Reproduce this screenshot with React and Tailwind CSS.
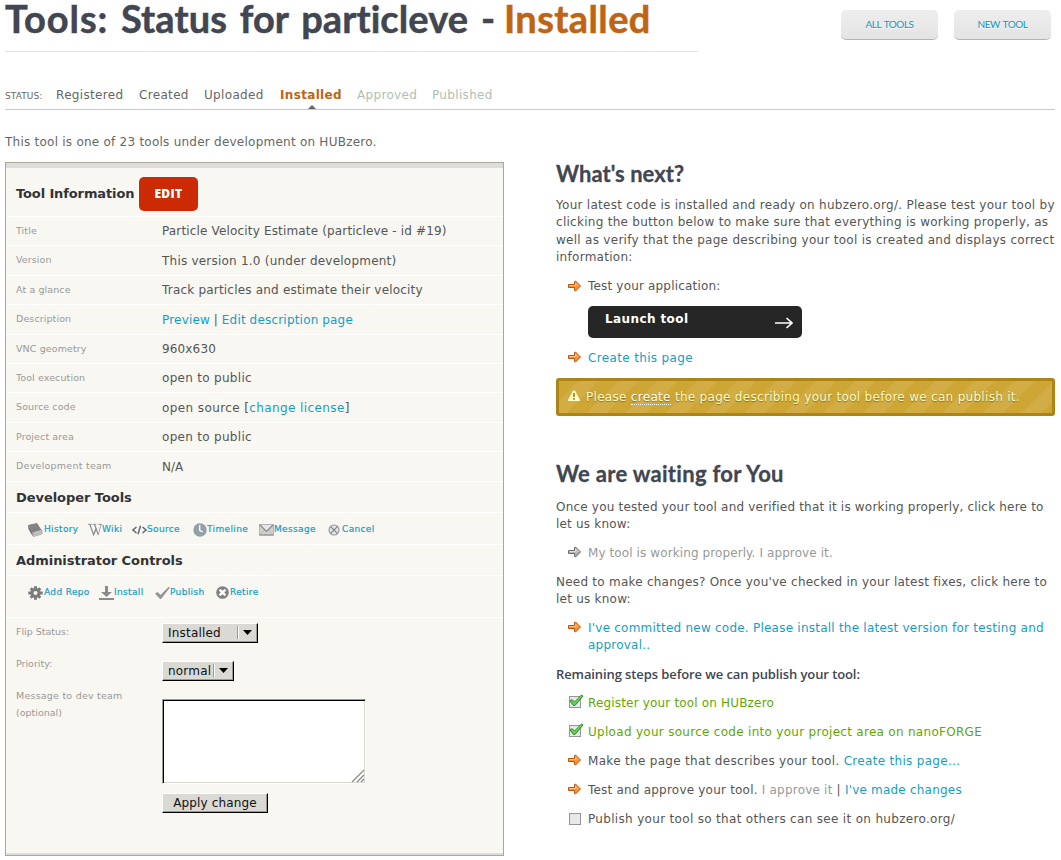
import React from "react";

const Arrow = ({ gray = false }) => {
  const edge = gray ? "#6a6a6a" : "#c05208";
  const fill = gray ? "#b8b8b8" : "#ff9434";
  return (
    <svg width="13" height="13" viewBox="0 0 13 13" className="block shrink-0">
      <path d="M0.5 4.5H6.5V1.5L7.5 1L12.5 6L7.5 11L6.5 10.5V7.5H0.5Z" fill={fill} stroke={edge} />
      <path d="M1.5 5.5H7.5V3L10.5 6" fill="none" stroke={gray ? "#dedede" : "#ffc27c"} />
      <path d="M8 9.5L11.5 6" fill="none" stroke={gray ? "#8c8c8c" : "#f07818"} />
    </svg>
  );
};

const Box = ({ checked = false }) => (
  <svg width="16" height="15" viewBox="0 0 16 15" className="block shrink-0">
    <rect x="1.5" y="2.5" width="11" height="11" fill="#e8e8e8" stroke="#969696" />
    {checked && (
      <>
        <path d="M2 7L4 5.5L6.5 8L13.5 1L15 2L7 11.5H5.5Z" fill="#58cc48" stroke="#2c8b28" />
        <path d="M4 7L6.5 9.5L13.5 2" fill="none" stroke="#8be070" strokeWidth=".6" />
      </>
    )}
  </svg>
);

const BookIcon = () => (
  <svg width="15" height="14" viewBox="0 0 15 14" className="block">
    <path d="M0 2L9 0L13.5 7L4.5 9.5Z" fill="#828282" />
    <path d="M0 2L4.5 9.5L4.8 13.5L0.5 6Z" fill="#6c6c6c" />
    <path d="M5 9.8L14 7.3V11L5.5 13.5Z" fill="#d4d4d4" stroke="#8a8a8a" strokeWidth=".6" />
    <path d="M5.5 11.7L14 9.2" stroke="#999" strokeWidth=".7" />
  </svg>
);
const WikiIcon = () => (
  <svg width="15" height="13" viewBox="0 0 15 13" className="block" fill="none" stroke="#8a8f94">
    <path d="M0 1H4M5 1H9M11 1H15" strokeWidth="1" />
    <path d="M2 1L6 12L9 5M7 1L11 12" strokeWidth="1.4" />
    <path d="M9 5L6 12M11 12L14 1" strokeWidth=".8" />
  </svg>
);
const CodeIcon = () => (
  <svg width="15" height="10" viewBox="0 0 15 10" className="block" fill="none" stroke="#606a70" strokeWidth="1.5">
    <path d="M4.5 2L1 5L4.5 8M10.5 2L14 5L10.5 8M8.5 .8L6 9.2" />
  </svg>
);
const ClockIcon = () => (
  <svg width="14" height="14" viewBox="0 0 14 14" className="block">
    <circle cx="7" cy="7" r="6.7" fill="#92a0aa" />
    <path d="M6.7 2V7.3L9.8 9" fill="none" stroke="#fff" strokeWidth="1.4" />
  </svg>
);
const MailIcon = () => (
  <svg width="15" height="12" viewBox="0 0 15 12" className="block">
    <rect x=".5" y=".5" width="14" height="10.5" fill="#d0d0d0" stroke="#b4b4b4" />
    <path d="M.5 10.5L6 5.5M14.5 10.5L9 5.5" stroke="#bcbcbc" />
    <path d="M1 1L7.5 7.5L14 1" fill="#e6e6e6" stroke="#858585" strokeWidth="1.1" />
    <path d="M.5 11H14.5" stroke="#888" />
  </svg>
);
const CancelIcon = () => (
  <svg width="12" height="12" viewBox="0 0 12 12" className="block" fill="none">
    <circle cx="6" cy="6" r="5" fill="#e3e5e7" stroke="#8d9399" strokeWidth="1.1" />
    <path d="M2.7 2.7L9.3 9.3M9.3 2.7L2.7 9.3" stroke="#7d8389" strokeWidth="1.2" />
  </svg>
);
const GearIcon = () => (
  <svg width="15" height="14" viewBox="0 0 15 14" className="block">
    <g stroke="#7b7b7b" strokeWidth="3">
      <path d="M7.5 0.3V13.7M0.3 7H14.7M2.7 2.2L12.3 11.8M12.3 2.2L2.7 11.8" />
    </g>
    <circle cx="7.5" cy="7" r="5" fill="#7b7b7b" />
    <circle cx="7.5" cy="7" r="2" fill="#f8f7f2" />
  </svg>
);
const InstallIcon = () => (
  <svg width="15" height="14" viewBox="0 0 15 14" className="block" fill="#8b8b8b">
    <path d="M6 0H9V6H13L7.5 11L2 6H6Z" />
    <path d="M0 12H15V14H0Z" />
  </svg>
);
const CheckIcon = () => (
  <svg width="15" height="12" viewBox="0 0 15 12" className="block">
    <path d="M0 6.5L2.5 5L5.5 8L13.5 0L15 .5L6 12H5Z" fill="#949494" />
  </svg>
);
const RetireIcon = () => (
  <svg width="13" height="13" viewBox="0 0 13 13" className="block">
    <circle cx="6.5" cy="6.5" r="6.3" fill="#808080" />
    <path d="M3.6 3.6L9.4 9.4M9.4 3.6L3.6 9.4" stroke="#fff" strokeWidth="2.4" />
  </svg>
);

const Link = ({ children }) => <a className="text-[#149ec6]">{children}</a>;

const rows = [
  ["Title", "Particle Velocity Estimate (particleve - id #19)", "pt-[1.4px] tracking-[0.16px]"],
  ["Version", "This version 1.0 (under development)", "pt-[1.4px] tracking-[0.22px]"],
  ["At a glance", "Track particles and estimate their velocity", "pt-[1.4px] tracking-[0.2px]"],
  ["Description", <><Link>Preview</Link> | <Link>Edit description page</Link></>, "pt-[2.6px] tracking-[0.2px] [word-spacing:-0.3px]"],
  ["VNC geometry", "960x630", "pt-[1.4px] tracking-[0.15px]"],
  ["Tool execution", "open to public", "pt-[1.4px] tracking-[0.3px]"],
  ["Source code", <>open source [<Link>change license</Link>]</>, "pt-[1.4px] tracking-[0.4px]"],
  ["Project area", "open to public", "pt-[1.4px] tracking-[0.3px]"],
  ["Development team", "N/A", "pt-[1.4px]"],
];

const ToolLink = ({ icon, label, w, iw = "w-[15px]" }) => (
  <a className={`flex items-start text-[9px] leading-[11px] tracking-[0.35px] text-[#149ec6] [-webkit-text-stroke:0.2px_#149ec6] ${w}`}>
    <span className={`flex h-[14px] shrink-0 items-center ${iw}`}>{icon}</span>
    <span className="pt-px">{label}</span>
  </a>
);

const Select = ({ label, w }) => (
  <div className={`flex h-[20px] items-center border-r border-b border-t border-l border-t-white border-l-white border-r-black border-b-black bg-[#dad9d4] pl-[5px] text-[12px] text-[#111] shadow-[inset_-1px_-1px_0_#9a9992] ${w}`}>
    <span className="flex-1 pt-[1.5px] tracking-[0.2px]">{label}</span>
    <span className="mr-[4px] h-[13px] w-[2px] border-l border-r border-l-[#9a9992] border-r-white" />
    <svg width="9" height="5" viewBox="0 0 9 5" className="mr-[5px] block"><path d="M0 0H9L4.5 5Z" /></svg>
  </div>
);

const Item = ({ icon, children, className = "", iconClass = "" }) => (
  <div className={`flex ${className}`}>
    <span className={`flex h-[17px] w-[20px] shrink-0 items-center ${iconClass}`}>{icon}</span>
    <div className="whitespace-nowrap">{children}</div>
  </div>
);

const label = "w-[146px] shrink-0 text-[9.5px] text-[#999]";
const button = "flex h-[30px] w-[97px] items-center justify-center rounded-[5px] border-b border-[#b4b4b4] bg-gradient-to-b from-[#eeeeee] to-[#e4e4e4] tracking-[-0.45px] [word-spacing:1px] [text-shadow:0_1px_0_#fff]";

export default function App() {
  return (
    <div className="h-[860px] w-[1061px] overflow-hidden bg-white pl-[5px] pr-[6px] font-['DejaVu_Sans',sans-serif] text-[12px] leading-[17.3px] text-[#555]">
      <header className="flex h-[52px] justify-between">
        <h1 className="h-[52px] w-[693px] whitespace-nowrap border-b border-[#e4e4e4] font-['Lato',sans-serif] text-[38px] font-bold leading-[36px] tracking-[0.08px] text-[#414651] [-webkit-text-stroke:0.5px] [word-spacing:3.5px]">
          <span className="tracking-[0.9px]">Tools:</span> Status for particleve - <span className="-ml-[4px] tracking-[0.4px] text-[#c06413]">Installed</span>
        </h1>
        <div className="mr-[4px] flex gap-[16px] pt-[10px] font-['Lato',sans-serif] text-[10px] text-[#0e93bb]">
          <a className={button}>ALL TOOLS</a>
          <a className={button}>NEW TOOL</a>
        </div>
      </header>

      <nav className="flex h-[58px] items-baseline border-b border-[#c8c9cb] pt-[35px] tracking-[0.33px] text-[#666]">
        <span className="w-[51px] text-[9px] tracking-[0.1px]">STATUS:</span>
        <span className="w-[83px]">Registered</span>
        <span className="w-[65px]">Created</span>
        <span className="w-[76px]">Uploaded</span>
        <span className="relative w-[77px] font-bold text-[#c06413]">
          Installed
          <svg width="8" height="4" viewBox="0 0 8 4" className="absolute left-[28px] top-[18px]"><path d="M0 4L4 0L8 4Z" fill="#666" /></svg>
        </span>
        <span className="w-[75px] text-[#b0c0b5]">Approved</span>
        <span className="text-[#b0c0b5]">Published</span>
      </nav>

      <p className="mt-[24px] h-[16px] tracking-[0.24px] text-[#666]">This tool is one of 23 tools under development on HUBzero.</p>

      <main className="mt-[12px] flex gap-[52px]">
        <section className="h-[694px] w-[499px] shrink-0 border border-[#aea697] bg-[#f8f7f2]">
          <div className="h-[5px] bg-[#ddd]" />
          <div className="flex h-[49px] items-center gap-[5px] border-b border-white pl-[10px] pt-[3px]">
            <h3 className="text-[13px] font-bold tracking-[-0.12px] text-[#333]">Tool Information</h3>
            <a className="flex h-[34px] w-[59px] items-center justify-center rounded-[5px] bg-[#cc2a04] pr-px font-['Open_Sans',sans-serif] text-[12px] font-extrabold tracking-[0.3px] text-white">EDIT</a>
          </div>
          {rows.map(([k, v, spacing]) => (
            <div key={k} className="flex h-[29.42px] items-center border-b border-white pl-[10px]">
              <span className={`${label} pb-px ${k === "Development team" ? "tracking-[0.25px]" : "tracking-[0.1px]"}`}>{k}</span>
              <span className={spacing}>{v}</span>
            </div>
          ))}
          <h3 className="flex h-[31px] items-center border-b border-white pl-[10px] pt-[2px] text-[13px] font-bold tracking-[-0.05px] text-[#333]">Developer Tools</h3>
          <div className="flex h-[32px] items-start border-b border-white pl-[22px] pt-[10px]">
            <ToolLink icon={<BookIcon />} label="History" w="w-[60px]" iw="w-[16px]" />
            <ToolLink icon={<WikiIcon />} label="Wiki" w="w-[44px]" iw="w-[14px]" />
            <ToolLink icon={<CodeIcon />} label="Source" w="w-[61px]" />
            <ToolLink icon={<ClockIcon />} label="Timeline" w="w-[66px]" iw="w-[14px]" />
            <ToolLink icon={<MailIcon />} label="Message" w="w-[69px]" />
            <ToolLink icon={<CancelIcon />} label="Cancel" w="w-[60px]" iw="w-[14px]" />
          </div>
          <h3 className="flex h-[31px] items-center border-b border-white pl-[10px] pt-[2px] text-[13px] font-bold tracking-[-0.05px] text-[#333]">Administrator Controls</h3>
          <div className="flex h-[42px] items-start border-b border-white pl-[22px] pt-[10px]">
            <ToolLink icon={<GearIcon />} label="Add Repo" w="w-[71px]" iw="w-[16px]" />
            <ToolLink icon={<InstallIcon />} label="Install" w="w-[56px]" />
            <ToolLink icon={<CheckIcon />} label="Publish" w="w-[61px]" />
            <ToolLink icon={<RetireIcon />} label="Retire" w="w-[60px]" iw="w-[14px]" />
          </div>
          <form className="pl-[10px]">
            <div className="flex h-[38px] pt-[5px]"><span className={label}>Flip Status:</span><Select label="Installed" w="w-[96px]" /></div>
            <div className="flex h-[38px] pt-[5px]"><span className={`${label} mt-[-6px]`}>Priority:</span><Select label="normal" w="w-[72px]" /></div>
            <div className="flex h-[99px]">
              <span className={`${label} mt-[-7px]`}><span className="tracking-[0.22px]">Message to dev team</span><br />(optional)</span>
              <div className="mt-[5px] flex h-[85px] w-[204px] items-end justify-end border border-b-white border-l-[#9a9992] border-r-white border-t-[#9a9992] bg-white shadow-[inset_1px_1px_0_#000,inset_-1px_-1px_0_#dad9d4]">
                <svg width="14" height="14" viewBox="0 0 14 14" fill="none" stroke="#8c8b87"><path d="M1 13L13 1M6 13L13 6M10 13L13 10" strokeWidth="1.3" /></svg>
              </div>
            </div>
            <div className="ml-[146px] flex h-[20px] w-[106px] items-center justify-center border-b border-l border-r border-t border-b-black border-l-white border-r-black border-t-white bg-[#dad9d4] pt-px tracking-[0.15px] text-[#111] shadow-[inset_-1px_-1px_0_#9a9992]">Apply change</div>
          </form>
          <div className="mt-[40px] h-[2px] bg-[#ddd]" />
        </section>

        <section className="w-[499px] shrink-0">
          <h2 className="h-[35px] font-['Lato',sans-serif] text-[22px] font-bold leading-[23px] tracking-[0.03px] text-[#414651] [-webkit-text-stroke:0.3px]">What's next?</h2>
          <p className="whitespace-nowrap tracking-[0.28px]">Your latest code is installed and ready on hubzero.org/. Please test your tool by<br />clicking the button below to make sure that everything is working properly, as<br />well as verify that the page describing your tool is created and displays correct<br />information:</p>
          <Item className="ml-[12px] mt-[12px] tracking-[0.18px]" iconClass="mt-[-0.5px]" icon={<Arrow />}>Test your application:</Item>
          <a className="ml-[32px] mt-[11px] flex h-[32px] w-[214px] items-start justify-between rounded-[5px] bg-[#262626] pl-[17px] pr-[9px] pt-[5px] font-bold tracking-[0.4px] text-white">
            Launch tool
            <svg width="18" height="12" viewBox="0 0 18 12" className="mt-[6px]" fill="none" stroke="#fff" strokeWidth="1.6"><path d="M0 6H17M11.5 1L17 6L11.5 11" /></svg>
          </a>
          <Item className="ml-[12px] mt-[11.5px] tracking-[0.35px]" iconClass="mt-[-0.5px]" icon={<Arrow />}><Link>Create this page</Link></Item>
          <div className="mt-[10.5px] flex h-[38px] items-center whitespace-nowrap rounded-[3px] border-[3px] border-[#ad8415] bg-[#cfa838] bg-[repeating-linear-gradient(135deg,#cda635_0px,#cda635_14px,#d2ad45_14px,#d2ad45_28px)] pl-[9px] tracking-[0.3px] text-[#fffbc0] [text-shadow:0_1px_1px_rgba(0,0,0,.35)]">
            <svg width="12" height="11" viewBox="0 0 12 11" className="mb-[3px] mr-[6px]"><path d="M5 .5H7L12 10V11H0V10Z" fill="#fffbc4" /><path d="M6 3V7M6 8V9.7" stroke="#9a7a20" strokeWidth="1.6" /></svg>
            <span className="pt-px">Please <a className="border-b border-dotted border-white text-white">create</a> the page describing your tool before we can publish it.</span>
          </div>
          <h2 className="mt-[45px] h-[38px] font-['Lato',sans-serif] text-[22px] font-bold leading-[25px] tracking-[0.3px] text-[#414651] [-webkit-text-stroke:0.3px]">We are waiting for You</h2>
          <p className="whitespace-nowrap tracking-[0.2px]">Once you tested your tool and verified that it is working properly, click here to<br />let us know:</p>
          <Item className="ml-[12px] mt-[11.5px] tracking-[0.1px] text-[#999]" iconClass="mt-[-0.5px]" icon={<Arrow gray />}>My tool is working properly. I approve it.</Item>
          <p className="mt-[11.5px] whitespace-nowrap tracking-[0.24px]">Need to make changes? Once you've checked in your latest fixes, click here to<br />let us know:</p>
          <Item className="ml-[12px] mt-[11.5px] tracking-[0.23px]" iconClass="mt-[-0.5px]" icon={<Arrow />}><Link>I've committed new code. Please install the latest version for testing and<br />approval..</Link></Item>
          <h4 className="mt-[12px] font-['Open_Sans',sans-serif] text-[13px] font-semibold tracking-[-0.1px] text-[#414651]">Remaining steps before we can publish your tool:</h4>
          <div className="ml-[12px] mt-[11px] flex flex-col gap-[11.75px]">
            <Item className="tracking-[0.17px] text-[#5fa800]" iconClass="mt-[-2px]" icon={<Box checked />}>Register your tool on HUBzero</Item>
            <Item className="tracking-[0.29px] text-[#5fa800]" iconClass="mt-[-2px]" icon={<Box checked />}>Upload your source code into your project area on nanoFORGE</Item>
            <Item className="tracking-[0.31px]" iconClass="mt-[-0.5px]" icon={<Arrow />}><span className="relative top-[0.6px]">Make the page that describes your tool. <Link>Create this page...</Link></span></Item>
            <Item className="tracking-[0.21px]" iconClass="mt-[-0.5px]" icon={<Arrow />}><span className="relative top-[0.6px]">Test and approve your tool. <span className="text-[#999]">I approve it</span> | <Link>I've made changes</Link></span></Item>
            <Item className="tracking-[0.32px]" iconClass="mt-[-0.5px]" icon={<Box />}>Publish your tool so that others can see it on hubzero.org/</Item>
          </div>
        </section>
      </main>
    </div>
  );
}
